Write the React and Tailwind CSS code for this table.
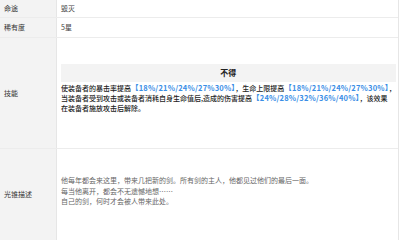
const font = { fontFamily: '"Noto Sans CJK SC", "Liberation Sans", sans-serif' };

function Row({ label, children, className = '' }) {
  return (
    <div className="flex border-b border-[#ececec]">
      <div className="w-[57px] shrink-0 bg-[#f3f3f3] border-r border-[#e6e6e6] flex items-center pl-[4px] text-[7px] text-[#333]">
        {label}
      </div>
      <div className={`flex-1 pl-[4px] pr-[5px] text-[7px] text-[#444] ${className}`}>{children}</div>
    </div>
  );
}

function Blue({ children }) {
  return <span className="text-[#3a8ee6] font-bold text-[7.5px] tracking-[0.2px]">{children}</span>;
}

export default function App() {
  return (
    <div className="w-[400px] h-[240px] bg-white overflow-hidden" style={font}>
      <div className="w-[399px] border-r border-[#e6e6e6] h-[240px] flex flex-col">
        <Row label="命途" className="h-[17px] flex items-center">毁灭</Row>
        <Row label="稀有度" className="h-[19px] flex items-center">5星</Row>
        <div className="flex border-b border-[#ececec] h-[111px]">
          <div className="w-[57px] shrink-0 bg-[#f3f3f3] border-r border-[#e6e6e6] flex items-center pl-[4px] text-[7px] text-[#333]">
            技能
          </div>
          <div className="flex-1 pl-[4px] pr-[5px] pt-[26px] text-[7px] text-[#222] font-medium">
            <div className="h-[18px] bg-[#f3f3f3] flex items-center justify-center font-bold text-[8px] text-[#222]">不得</div>
            <div className="mt-[1px] leading-[10px] whitespace-nowrap">
              <p>使装备者的暴击率提高<Blue>【18%/21%/24%/27%30%】</Blue>，生命上限提高<Blue>【18%/21%/24%/27%30%】</Blue>，</p>
              <p>当装备者受到攻击或装备者消耗自身生命值后,造成的伤害提高<Blue>【24%/28%/32%/36%/40%】</Blue>，该效果</p>
              <p>在装备者施放攻击后解除。</p>
            </div>
          </div>
        </div>
        <div className="flex flex-1">
          <div className="w-[57px] shrink-0 bg-[#f3f3f3] border-r border-[#e6e6e6] flex items-center pl-[4px] text-[7px] text-[#333]">
            光锥描述
          </div>
          <div className="flex-1 pl-[4px] pr-[5px] pt-[26px] text-[7px] text-[#666] leading-[10.5px]">
            <p>他每年都会来这里，带来几把新的剑。所有剑的主人，他都见过他们的最后一面。</p>
            <p>每当他离开，都会不无遗憾地想……</p>
            <p>自己的剑，何时才会被人带来此处。</p>
          </div>
        </div>
      </div>
    </div>
  );
}
